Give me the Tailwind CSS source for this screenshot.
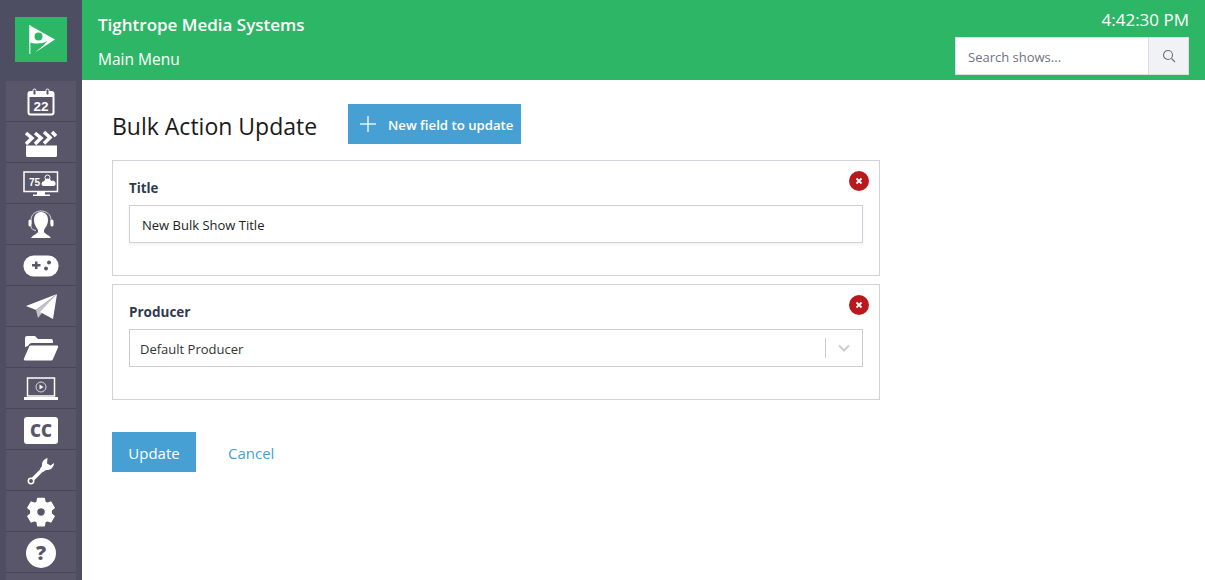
<!DOCTYPE html>
<html lang="en">
<head>
  <meta charset="UTF-8">
  <title>Bulk Action Update</title>
  <script src="https://cdn.jsdelivr.net/npm/@tailwindcss/browser@4"></script>
</head>
<body class="h-[580px] overflow-hidden bg-white font-['Open_Sans','Noto_Sans',sans-serif] flex">
  <!-- sidebar -->
  <aside class="w-[82px] shrink-0 h-full overflow-hidden bg-[#4e4e62] flex flex-col">
    <div class="h-[81px] shrink-0 flex items-start justify-center pt-[17px]">
      <div class="w-[52px] h-[45px] bg-[#2db665] flex items-center justify-center">
        <svg width="28" height="32" viewBox="0 0 28 32">
          <path d="M2 1h1.500v29H2z" fill="#c9ecd7"/>
          <path d="M3 1.500L28 15.500 8 28.500C13 24 18 21 20 17 16 20 8 20 3 18.500z" fill="#fff"/>
          <circle cx="11.500" cy="12.500" r="4" fill="#2db665"/>
        </svg>
      </div>
    </div>
    <nav class="ml-[6px] w-[70px] flex flex-col">
      <a class="h-[41px] pt-[2px] bg-[#5a5669] border-b border-[#474658] flex items-center justify-center">
        <svg width="28" height="28" viewBox="0 0 28 28"><rect x="1.500" y="4" width="25" height="22.500" rx="2" fill="none" stroke="#fff" stroke-width="2"/><rect x="1.500" y="4" width="25" height="5" fill="#fff"/><rect x="6" y="1" width="3" height="6" rx="1.500" fill="#5a5669" stroke="#fff"/><rect x="19" y="1" width="3" height="6" rx="1.500" fill="#5a5669" stroke="#fff"/><text x="14" y="23" text-anchor="middle" font-family="Liberation Sans" font-weight="700" font-size="13.500" fill="#fff">22</text></svg>
      </a>
      <a class="h-[41px] pt-[2px] bg-[#5a5669] border-b border-[#474658] flex items-center justify-center">
        <svg width="32" height="28" viewBox="0 0 32 28"><path d="M1 16.500h31v10a1.500 1.500 0 0 1-1.500 1.500h-28A1.500 1.500 0 0 1 1 26.500z" fill="#fff"/><g fill="none" stroke="#fff" stroke-width="3.500"><path d="M1 4l6 5-6 6"/><path d="M10 4l6 5-6 6"/><path d="M19 3l6 5.500-6 6"/><path d="M27 3l4 4"/></g></svg>
      </a>
      <a class="h-[41px] pt-[2px] bg-[#5a5669] border-b border-[#474658] flex items-center justify-center">
        <svg width="36" height="26" viewBox="0 0 36 26"><rect x="1" y="1" width="33.500" height="19.500" fill="none" stroke="#fff" stroke-width="1.500"/><path d="M14 21h8v2.500h5v1.500H10v-1.500h4z" fill="#fff"/><text x="6" y="15" font-family="Liberation Sans" font-weight="700" font-size="10" fill="#fff">75</text><path d="M20 15a2.500 2.500 0 0 1 1-4.800 4 4 0 0 1 7.500-.2 2.500 2.500 0 0 1 2.500 5z" fill="#fff"/><circle cx="24.500" cy="6.500" r="2.500" fill="none" stroke="#fff"/></svg>
      </a>
      <a class="h-[41px] pt-[2px] bg-[#5a5669] border-b border-[#474658] flex items-center justify-center">
        <svg width="28" height="30" viewBox="0 0 28 30"><path d="M14 2c-5 0-7 4-7 8 0 5 3 8 4 10v2c-1 2-5 3-7 6h20c-2-3-6-4-7-6v-2c1-2 4-5 4-10 0-4-2-8-7-8z" fill="#fff"/><path d="M4 14V10C4 4 9 1 14 1s10 3 10 9v4" fill="none" stroke="#d8d6dc" stroke-width="1"/><rect x="1.500" y="9.500" width="3" height="7" rx="1.500" fill="#fff"/><rect x="23.500" y="9.500" width="3" height="7" rx="1.500" fill="#fff"/><path d="M4 16c0 3 2 4 5 4.500" fill="none" stroke="#d8d6dc"/></svg>
      </a>
      <a class="h-[41px] pt-[2px] bg-[#5a5669] border-b border-[#474658] flex items-center justify-center">
        <svg width="36" height="22" viewBox="0 0 36 22"><rect x="0.500" y="0.500" width="35" height="21" rx="10" fill="#fff"/><path d="M9 9h3V6.500h2.500V9h3v2.500h-3V14H12v-2.500H9z" fill="#5a5669"/><circle cx="26" cy="7.500" r="2" fill="#5a5669"/><circle cx="23" cy="13.500" r="2" fill="#5a5669"/></svg>
      </a>
      <a class="h-[41px] pt-[2px] bg-[#5a5669] border-b border-[#474658] flex items-center justify-center">
        <svg width="32" height="26" viewBox="0 0 32 26"><path d="M32 0L1 12l10 4z" fill="#fff"/><path d="M32 0L11 16l2 8 4-5z" fill="#c3c2c9"/><path d="M32 0L15 18l13 7z" fill="#fff"/></svg>
      </a>
      <a class="h-[41px] pt-[2px] bg-[#5a5669] border-b border-[#474658] flex items-center justify-center">
        <svg width="36" height="26" viewBox="0 0 36 26"><path d="M2 12V3a2 2 0 0 1 2-2h8l3 3h13a2 2 0 0 1 2 2v2H9c-2 0-3 1-4 3z" fill="#fff"/><path d="M8 10.500h26c1 0 1.500.8 1 2L30 24c-.4 1-1 1.500-2 1.500H2c-1 0-1.500-.8-1-2L6 12c.4-1 1-1.500 2-1.500z" fill="#fff"/></svg>
      </a>
      <a class="h-[41px] pt-[2px] bg-[#5a5669] border-b border-[#474658] flex items-center justify-center">
        <svg width="34" height="24" viewBox="0 0 34 24"><rect x="3.500" y="1" width="27" height="18" fill="none" stroke="#fff" stroke-width="1.500"/><circle cx="17" cy="10" r="5" fill="none" stroke="#d8d6dc"/><path d="M15.500 7.500l4 2.500-4 2.500z" fill="#fff"/><path d="M0 20h34v3H0z" fill="#fff"/></svg>
      </a>
      <a class="h-[41px] pt-[2px] bg-[#5a5669] border-b border-[#474658] flex items-center justify-center">
        <div class="w-[34px] h-[27px] bg-white rounded-[3px] flex items-center justify-center text-[#5a5669] text-[17px] font-extrabold leading-none">CC</div>
      </a>
      <a class="h-[41px] pt-[2px] bg-[#5a5669] border-b border-[#474658] flex items-center justify-center">
        <svg width="28" height="28" viewBox="0 0 28 28"><path d="M4.500 23.500L17 11" fill="none" stroke="#fff" stroke-width="3.500"/><circle cx="4" cy="24" r="2.700" fill="#5a5669" stroke="#fff" stroke-width="1.500"/><path d="M21.500 1c-4 .2-7 3.500-6.500 8l-2 3 3 3 3-2c4.500.5 8-2.500 8-7l-3.500 2.500-3.500-2 .5-5.500z" fill="#fff"/></svg>
      </a>
      <a class="h-[41px] pt-[2px] bg-[#5a5669] border-b border-[#474658] flex items-center justify-center">
        <svg width="30" height="30" viewBox="0 0 24 24"><path fill="#fff" fill-rule="evenodd" d="M14.700 1l.5 3.100 1.700 1 3-1.100 2.700 4.700-2.400 2v2.600l2.400 2-2.700 4.700-3-1.100-1.700 1-.5 3.100H9.300l-.5-3.100-1.700-1-3 1.100-2.700-4.700 2.400-2v-2.600l-2.400-2L4.100 4l3 1.100 1.700-1L9.300 1zM12 8.500a3.500 3.500 0 1 0 0 7 3.500 3.500 0 0 0 0-7z" stroke="#fff" stroke-width="1" stroke-linejoin="round"/></svg>
      </a>
      <a class="h-[41px] pt-[2px] bg-[#5a5669] border-b border-[#474658] flex items-center justify-center">
        <div class="w-[30px] h-[30px] rounded-full bg-white flex items-center justify-center text-[#5a5669] text-[20px] font-extrabold leading-none">?</div>
      </a>
      <a class="h-[7px] bg-[#5a5669]"></a>
    </nav>
  </aside>

  <div class="flex-1 min-w-0 flex flex-col">
    <!-- top bar -->
    <header class="h-[80px] shrink-0 bg-[#2db665] text-white flex justify-between pl-4 pr-4">
      <div>
        <div class="mt-[13px] text-[17px] leading-[24px] font-semibold">Tightrope Media Systems</div>
        <div class="mt-[10px] text-[15.500px] leading-[24px]">Main Menu</div>
      </div>
      <div class="flex flex-col items-end">
        <div class="mt-[9px] h-[22px] text-[17px] leading-[22px]">4:42:30 PM</div>
        <div class="mt-[6px] w-[234px] h-[38px] flex border border-[#dcdde3] bg-white">
          <div class="flex-1 flex items-center pl-3 pt-[4px] text-[13px] text-[#6f7280]">Search shows...</div>
          <div class="w-[40px] bg-[#f1f2f5] border-l border-[#dcdde3] flex items-center justify-center">
            <svg width="14" height="14" viewBox="0 0 14 14" fill="none" stroke="#6b6f7a" stroke-width="1.100"><circle cx="6" cy="6" r="4.500"/><path d="M9.500 9.500l3.500 3.500"/></svg>
          </div>
        </div>
      </div>
    </header>

    <main class="pl-[30px] pt-[24px] w-[798px]">
      <div class="flex items-start h-[40px]">
        <h1 class="text-[23px] h-[40px] leading-[44px] text-[#1a1a1a] w-[236px]">Bulk Action Update</h1>
        <button class="h-[40px] w-[173px] bg-[#47a0d4] text-white flex items-center pl-[11px]">
          <svg width="18" height="18" viewBox="0 0 18 18" stroke="#e6f2f9" stroke-width="1.500"><path d="M9 1v16M1 9h16"/></svg>
          <span class="ml-[11px] mt-[4px] text-[13.200px] font-semibold">New field to update</span>
        </button>
      </div>

      <section class="relative mt-4 h-[116px] border border-[#d1d2d9] pt-[16px] px-4">
        <label class="block text-[13.300px] leading-[22px] font-bold text-[#2f3a4f]">Title</label>
        <div class="mt-[6px] h-[38px] border border-[#cfd0d9] shadow-[0_2px_3px_rgba(0,0,0,0.05)] flex items-center pl-3 pt-[4px] text-[13px] text-[#222]">New Bulk Show Title</div>
        <span class="absolute top-[10px] right-[10px] w-5 h-5 rounded-full bg-[#b8191d] flex items-center justify-center">
          <svg width="8" height="8" viewBox="0 0 8 8" stroke="#fff" stroke-width="1.800"><path d="M1.500 1.500l5 5M6.500 1.500l-5 5"/></svg>
        </span>
      </section>

      <section class="relative mt-2 h-[116px] border border-[#d1d2d9] pt-[16px] px-4">
        <label class="block text-[13.500px] leading-[22px] font-bold text-[#2f3a4f]">Producer</label>
        <div class="mt-[6px] h-[38px] border border-[#cccccc] flex items-center pl-[10px] text-[13px] text-[#333]">
          <span class="flex-1 mt-[4px]">Default Producer</span>
          <span class="w-px h-5 bg-[#cccccc]"></span>
          <span class="w-[36px] flex justify-center">
            <svg width="12" height="8" viewBox="0 0 12 8" fill="none" stroke="#cccccc" stroke-width="2"><path d="M1 1.500l5 5 5-5"/></svg>
          </span>
        </div>
        <span class="absolute top-[10px] right-[10px] w-5 h-5 rounded-full bg-[#b8191d] flex items-center justify-center">
          <svg width="8" height="8" viewBox="0 0 8 8" stroke="#fff" stroke-width="1.800"><path d="M1.500 1.500l5 5M6.500 1.500l-5 5"/></svg>
        </span>
      </section>

      <div class="mt-8 flex items-center">
        <button class="w-[84px] h-[40px] pt-[2px] bg-[#47a0d4] text-white text-[15px]">Update</button>
        <a class="ml-[32px] mt-[2px] text-[15px] text-[#47a0d4]">Cancel</a>
      </div>
    </main>
  </div>
</body>
</html>
